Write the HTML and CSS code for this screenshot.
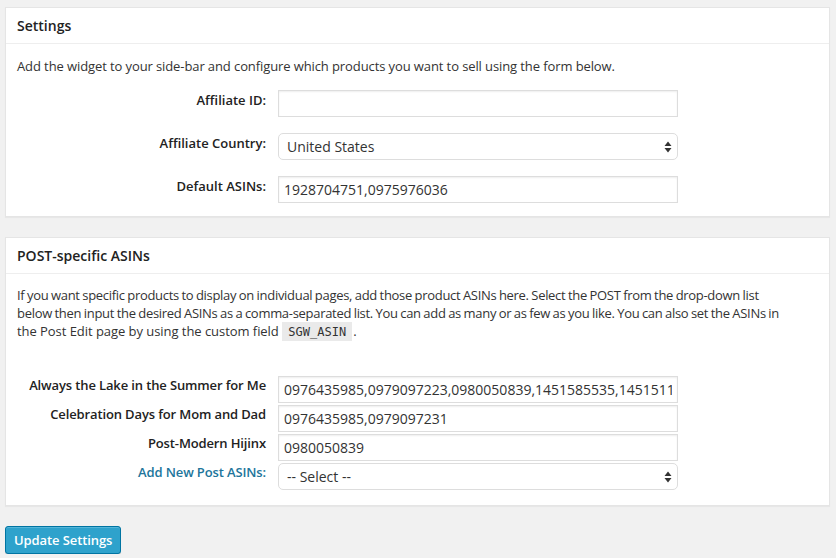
FILE: index.html
```html
<!DOCTYPE html>
<html>
<head>
<meta charset="utf-8">
<link rel="stylesheet" href="styles.css">
</head>
<body>
<div class="page">
  <div class="panel panel-settings">
    <div class="panel-head">Settings</div>
    <div class="panel-body">
      <p class="desc">Add the widget to your side-bar and configure which products you want to sell using the form below.</p>
      <div class="form form-main">
        <label class="lbl">Affiliate ID:</label>
        <input class="field" type="text" value="">
        <label class="lbl">Affiliate Country:</label>
        <div class="select-wrap">
          <div class="select">United States</div>
          <svg class="arrows" width="8" height="12" viewBox="0 0 8 12"><path d="M4 0.5 L7.5 5 H0.5 Z M4 11.5 L7.5 7 H0.5 Z" fill="#333"/></svg>
        </div>
        <label class="lbl">Default ASINs:</label>
        <input class="field" type="text" value="1928704751,0975976036">
      </div>
    </div>
  </div>

  <div class="panel panel-post">
    <div class="panel-head">POST-specific ASINs</div>
    <div class="panel-body panel-body-post">
      <p class="desc desc-narrow">If you want specific products to display on individual pages, add those product ASINs here. Select the POST from the drop-down list<br>below then input the desired ASINs as a comma-separated list. You can add as many or as few as you like. You can also set the ASINs in<br><span class="last-line">the Post Edit page by using the custom field</span> <code class="code">SGW_ASIN</code>.</p>
      <div class="form form-post">
        <label class="lbl">Always the Lake in the Summer for Me</label>
        <input class="field" type="text" value="0976435985,0979097223,0980050839,1451585535,1451511">
        <label class="lbl">Celebration Days for Mom and Dad</label>
        <input class="field" type="text" value="0976435985,0979097231">
        <label class="lbl">Post-Modern Hijinx</label>
        <input class="field" type="text" value="0980050839">
        <label class="lbl lbl-link">Add New Post ASINs:</label>
        <div class="select-wrap">
          <div class="select">-- Select --</div>
          <svg class="arrows" width="8" height="12" viewBox="0 0 8 12"><path d="M4 0.5 L7.5 5 H0.5 Z M4 11.5 L7.5 7 H0.5 Z" fill="#333"/></svg>
        </div>
      </div>
    </div>
  </div>

  <div class="actions">
    <button class="btn-primary" type="button">Update Settings</button>
  </div>
</div>
</body>
</html>
```
FILE: styles.css
```css
* { box-sizing: border-box; }
html, body { margin: 0; padding: 0; }
body {
  background: #f1f1f1;
  font-family: "Open Sans", "Liberation Sans", sans-serif;
  font-size: 13px;
  color: #444;
}
.page {
  padding: 7px 6px 0 5px;
  display: flex;
  flex-direction: column;
}
.panel {
  background: #fff;
  border: 1px solid #e5e5e5;
  box-shadow: 0 1px 1px rgba(0,0,0,0.04);
}
.panel-post { margin-top: 20px; }
.panel-head {
  height: 36px;
  line-height: 35px;
  padding: 0 11px;
  font-size: 14px;
  font-weight: 600;
  color: #222;
  border-bottom: 1px solid #eee;
}
.panel-body {
  padding: 13px 11px 13px 11px;
}
.panel-body-post { padding-bottom: 15px; }
.desc {
  margin: 0;
  line-height: 19px;
  color: #333;
  letter-spacing: -0.1px;
}
.desc-narrow {
  letter-spacing: -0.3px;
  word-spacing: -0.5px;
  line-height: 18px;
  margin-top: -1px;
}
.last-line { letter-spacing: -0.05px; word-spacing: 0; }
.code {
  font-family: "DejaVu Sans Mono", "Liberation Mono", monospace;
  font-size: 12px;
  letter-spacing: 0;
  background: #eaeaea;
  padding: 3px 6px 2px;
  margin: 0 1px;
  color: #333;
}
.form {
  display: grid;
  grid-template-columns: 249px 400px;
  column-gap: 12px;
  align-items: start;
}
.form-main { margin-top: 14px; row-gap: 16px; }
.form-post { margin-top: 35px; row-gap: 2px; }
.lbl {
  text-align: right;
  font-weight: 600;
  color: #222;
  line-height: 19px;
  padding-top: 1px;
  white-space: nowrap;
}
.form-post .lbl { padding-top: 0; letter-spacing: -0.13px; }
.lbl-link { color: #21759b; }
.field {
  width: 400px;
  height: 27px;
  margin: 0;
  border: 1px solid #ddd;
  box-shadow: inset 0 1px 2px rgba(0,0,0,0.07);
  background: #fff;
  font-family: "Open Sans", "Liberation Sans", sans-serif;
  font-size: 14px;
  color: #333;
  padding: 0 5px;
  outline: none;
}
.select-wrap {
  position: relative;
  width: 400px;
  height: 27px;
}
.select {
  height: 27px;
  line-height: 25px;
  border: 1px solid #ddd;
  border-radius: 5px;
  background: #fff;
  padding: 0 8px;
  font-size: 14px;
  color: #333;
}
.arrows {
  position: absolute;
  right: 6px;
  top: 8px;
}
.actions {
  margin-top: 20px;
}
.btn-primary {
  height: 28px;
  padding: 0 8px;
  background: #2ea2cc;
  border: 1px solid #0074a2;
  border-radius: 3px;
  box-shadow: inset 0 1px 0 rgba(120,200,230,0.5), 0 1px 0 rgba(0,0,0,0.15);
  color: #fff;
  font-family: "Open Sans", "Liberation Sans", sans-serif;
  font-size: 13px;
  font-weight: 600;
  letter-spacing: -0.1px;
  cursor: pointer;
}
```
